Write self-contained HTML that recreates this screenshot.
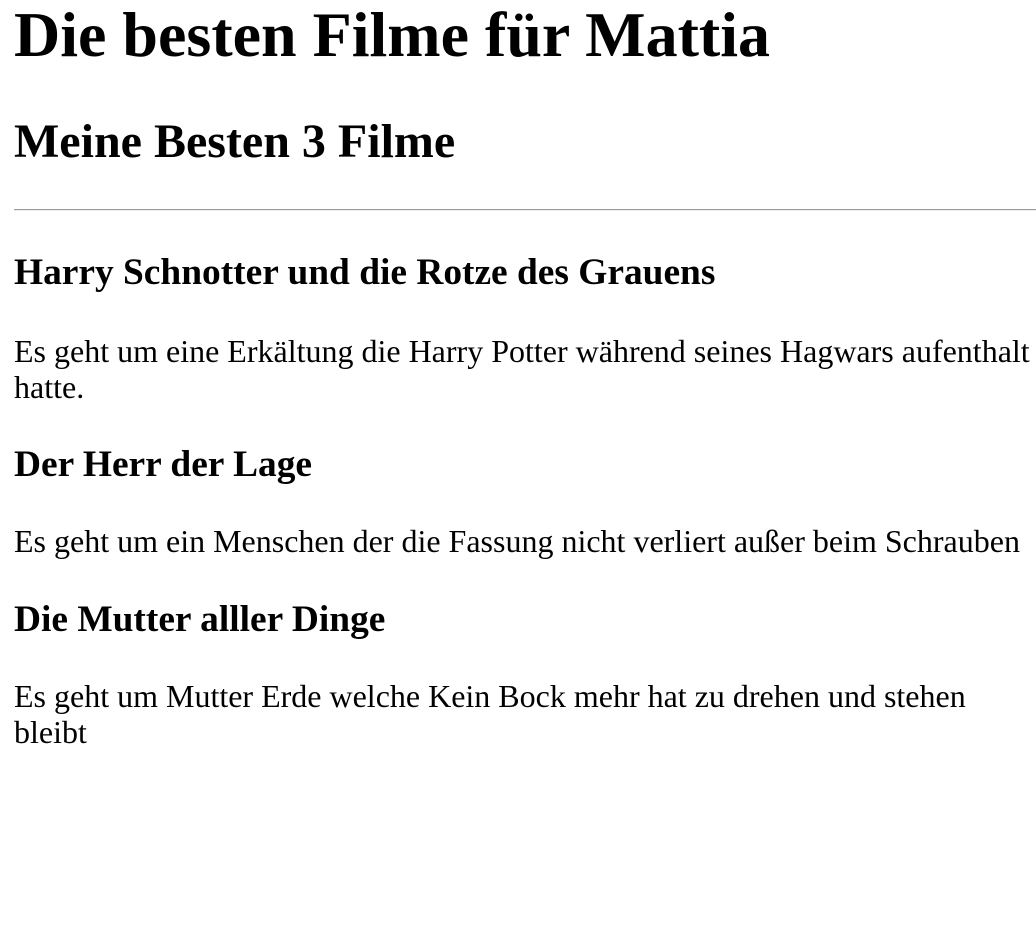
<!DOCTYPE html>
<html><head><meta charset="utf-8"><style>
html,body{margin:0;padding:0;background:#fff;width:1036px;height:938px;overflow:hidden;position:relative;font-family:"Liberation Serif",serif;color:#000}
.a{position:absolute;left:14px;margin:0;white-space:nowrap;font-weight:bold}
p.a{font-weight:normal;font-size:32px;line-height:36px}
h1.a{font-size:64px;line-height:71px}
h2.a{font-size:48px;line-height:54px}
h3.a{font-size:37.4px;line-height:42px}
hr{position:absolute;left:14px;top:209px;width:1040px;margin:0;border:0;border-top:1px solid #9a9a9a;border-bottom:1px solid #eee;height:0}
</style></head><body>
<h1 class="a" style="top:-1px">Die besten Filme für Mattia</h1>
<h2 class="a" style="top:115px">Meine Besten 3 Filme</h2>
<hr>
<h3 class="a" style="top:252px">Harry Schnotter und die Rotze des Grauens</h3>
<p class="a" style="top:333px">Es geht um eine Erkältung die Harry Potter während seines Hagwars aufenthalt<br>hatte.</p>
<h3 class="a" style="top:444px">Der Herr der Lage</h3>
<p class="a" style="top:523px">Es geht um ein Menschen der die Fassung nicht verliert außer beim Schrauben</p>
<h3 class="a" style="top:599px">Die Mutter alller Dinge</h3>
<p class="a" style="top:678px">Es geht um Mutter Erde welche Kein Bock mehr hat zu drehen und stehen<br>bleibt</p>
</body></html>
